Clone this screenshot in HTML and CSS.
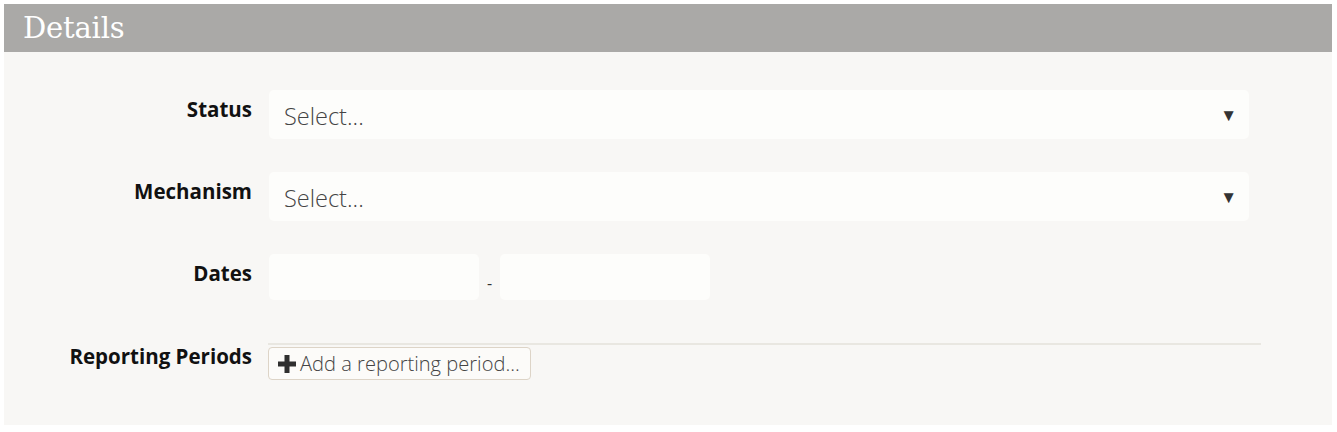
FILE: index.html
```html
<!DOCTYPE html>
<html>
<head>
<meta charset="utf-8">
<link rel="stylesheet" href="styles.css">
</head>
<body>
<section class="panel">
  <header class="panel-header"><h2>Details</h2></header>
  <div class="panel-body">
    <div class="row">
      <label class="label">Status</label>
      <div class="field">
        <div class="select"><span>Select...</span><span class="arrow">▼</span></div>
      </div>
    </div>
    <div class="row">
      <label class="label">Mechanism</label>
      <div class="field">
        <div class="select"><span>Select...</span><span class="arrow">▼</span></div>
      </div>
    </div>
    <div class="row">
      <label class="label">Dates</label>
      <div class="field dates">
        <div class="date-input"></div>
        <span class="dash">-</span>
        <div class="date-input"></div>
      </div>
    </div>
    <div class="row row-last">
      <label class="label">Reporting Periods</label>
      <div class="field periods">
        <button class="add-btn" type="button">
          <svg class="plus" width="20" height="20" viewBox="0 0 20 20"><path d="M7.5 1h5v6.5H19v5h-6.5V19h-5v-6.5H1v-5h6.5z" fill="#2f2f2f"/></svg>
          <span>Add a reporting period...</span>
        </button>
      </div>
    </div>
  </div>
</section>
</body>
</html>
```
FILE: styles.css
```css
html, body {
  margin: 0;
  padding: 0;
  background: #ffffff;
}
body {
  padding: 4px 5px 8px 4px;
  font-family: "Open Sans", "Noto Sans", sans-serif;
  color: #333;
}
.panel {
  background: #f8f7f5;
}
.panel-header {
  background: #aaa9a7;
  height: 48px;
  display: flex;
  align-items: center;
  padding-left: 19px;
}
.panel-header h2 {
  margin: 0;
  font-family: "DejaVu Serif", "Liberation Serif", serif;
  font-weight: normal;
  font-size: 29px;
  color: #ffffff;
  letter-spacing: -0.2px;
}
.panel-body {
  padding: 38px 0 45px 0;
  display: flex;
  flex-direction: column;
  gap: 33px;
}
.row {
  display: flex;
  gap: 17px;
  align-items: flex-start;
}
.label {
  width: 248px;
  flex: none;
  text-align: right;
  font-weight: 700;
  font-size: 20.5px;
  line-height: 26px;
  padding-top: 6px;
  color: #111;
}
.field {
  width: 980px;
}
.select {
  height: 49px;
  background: #fdfdfb;
  border-radius: 5px;
  display: flex;
  align-items: center;
  justify-content: space-between;
  padding: 0 12px 0 15px;
  box-sizing: border-box;
  font-size: 23.5px;
  font-weight: 300;
  color: #444;
}
.select span:first-child {
  padding-top: 2px;
}
.arrow {
  font-size: 17px;
  color: #333;
}
.dates {
  display: flex;
  align-items: center;
}
.date-input {
  width: 210px;
  height: 46px;
  background: #fdfdfb;
  border-radius: 5px;
}
.dash {
  width: 21px;
  text-align: center;
  font-size: 16px;
  color: #333;
  padding-top: 12px;
}
.row-last {
  gap: 16px;
  margin-top: 10px;
}
.row-last .label {
  padding-top: 0;
}
.periods {
  width: 993px;
  border-top: 2px solid #e9e7e1;
  padding-top: 2px;
}
.add-btn {
  display: inline-flex;
  align-items: center;
  gap: 3px;
  height: 33px;
  padding: 0 10px 0 8px;
  background: #fcfbf9;
  border: 1px solid #ddd4c7;
  border-radius: 4px;
  font-family: "Open Sans", "Noto Sans", sans-serif;
  font-size: 20.1px;
  font-weight: 300;
  color: #444;
  box-sizing: border-box;
}
.plus {
  flex: none;
}
```
